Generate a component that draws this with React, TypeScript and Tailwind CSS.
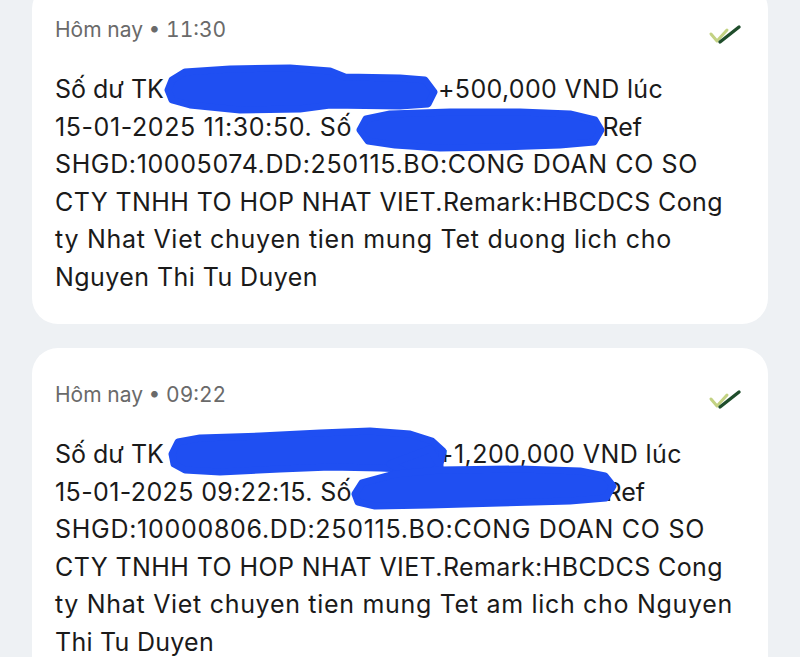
import React, { useLayoutEffect, useRef, useState } from "react";

const font = { fontFamily: "Inter, 'Noto Sans', sans-serif" };

// stretches a run of text to the width it has in the screenshot
const Fit = ({ w, children }: { w: number; children: React.ReactNode }) => {
  const ref = useRef<HTMLSpanElement>(null);
  const [ls, setLs] = useState(0);
  useLayoutEffect(() => {
    const el = ref.current;
    if (!el) return;
    const run = () => {
      const n = (el.textContent || "").length;
      const cur = parseFloat(getComputedStyle(el).letterSpacing) || 0;
      const natural = el.getBoundingClientRect().width - n * cur;
      setLs((w - natural) / n);
    };
    run();
    document.fonts?.ready.then(run);
  }, [w]);
  return (
    <span ref={ref} className="inline-block whitespace-nowrap" style={{ letterSpacing: ls }}>
      {children}
    </span>
  );
};

const DoubleCheck = () => (
  <svg width="34" height="22" viewBox="0 0 34 22" className="mt-[8px] mr-[-2px]">
    <path d="M3 10 L9 17 L19 6" fill="none" stroke="#c3d283" strokeWidth="3" strokeLinecap="round" strokeLinejoin="round" />
    <path d="M12 18 L31 3" fill="none" stroke="#1f4d2b" strokeWidth="3.4" strokeLinecap="round" />
  </svg>
);

const blob = (pts: number[][]) => "M" + pts.map((p) => p.join(" ")).join(" L") + " Z";

// blue marker over the account numbers, in body coordinates
const Redact = ({ shapes }: { shapes: number[][][] }) => (
  <svg className="absolute left-0 top-0 w-full h-full overflow-visible pointer-events-none">
    {shapes.map((s, i) => (
      <path key={i} d={blob(s)} fill="#1f4ff2" stroke="#1f4ff2" strokeWidth="7" strokeLinejoin="round" />
    ))}
  </svg>
);

type Line = { w: number; text?: string; pre?: string; preW?: number; post?: string; postW?: number };

const Card = ({ time, lines, shapes, first }: { time: string; lines: Line[]; shapes: number[][][]; first?: boolean }) => (
  <div className={`bg-white rounded-[26px] pl-[23px] pr-[28px] pt-[33px] pb-[28px] ${first ? "mt-[-17px]" : ""}`}>
    <div className="flex items-start justify-between">
      <div className="text-[21px] leading-[28px] text-[#6a6a6a] tabular-nums">{time}</div>
      <DoubleCheck />
    </div>
    <div className="relative mt-[25px] text-[25px] leading-[37.5px] text-[#1a1a1a]">
      {lines.map((l, i) =>
        l.text ? (
          <div key={i} className="h-[37.5px]">
            <Fit w={l.w}>{l.text}</Fit>
          </div>
        ) : (
          <div key={i} className="flex justify-between h-[37.5px] whitespace-nowrap" style={{ width: l.w }}>
            {l.preW ? <Fit w={l.preW}>{l.pre}</Fit> : <span>{l.pre}</span>}
            {l.postW ? <Fit w={l.postW}>{l.post}</Fit> : <span>{l.post}</span>}
          </div>
        )
      )}
      <Redact shapes={shapes} />
    </div>
  </div>
);

export default function App() {
  return (
    <div className="w-[800px] h-[657px] overflow-hidden bg-[#eef1f4] px-8" style={font}>
      <div className="flex flex-col gap-[24px]">
        <Card
          first
          time="Hôm nay • 11:30"
          lines={[
            { w: 608, pre: "Số dư TK", post: "+500,000 VND lúc", postW: 225 },
            { w: 587, pre: "15-01-2025 11:30:50. Số", preW: 297, post: "Ref" },
            { w: 643, text: "SHGD:10005074.DD:250115.BO:CONG DOAN CO SO" },
            { w: 668, text: "CTY TNHH TO HOP NHAT VIET.Remark:HBCDCS Cong" },
            { w: 617, text: "ty Nhat Viet chuyen tien mung Tet duong lich cho" },
            { w: 263, text: "Nguyen Thi Tu Duyen" },
          ]}
          shapes={[
            [[113, 19], [117, 9], [130, 1], [175, -2], [235, -3], [275, 0], [290, 6], [345, 7], [370, 9], [379, 21], [373, 33], [345, 35], [275, 34], [245, 38], [185, 39], [135, 34], [117, 29]],
            [[305, 59], [311, 48], [335, 43], [395, 41], [465, 41], [515, 43], [540, 49], [546, 59], [539, 71], [505, 74], [445, 76], [385, 77], [340, 74], [313, 70]],
          ]}
        />
        <Card
          time="Hôm nay • 09:22"
          lines={[
            { w: 627, pre: "Số dư TK", post: "+1,200,000 VND lúc", postW: 245 },
            { w: 590, pre: "15-01-2025 09:22:15. Số", preW: 297, post: "Ref" },
            { w: 650, text: "SHGD:10000806.DD:250115.BO:CONG DOAN CO SO" },
            { w: 668, text: "CTY TNHH TO HOP NHAT VIET.Remark:HBCDCS Cong" },
            { w: 678, text: "ty Nhat Viet chuyen tien mung Tet am lich cho Nguyen" },
            { w: 159, text: "Thi Tu Duyen" },
          ]}
          shapes={[
            [[117, 18], [123, 6], [145, 2], [205, 0], [265, -3], [315, -5], [355, -2], [377, 5], [388, 15], [385, 28], [370, 34], [325, 32], [275, 31], [225, 33], [165, 36], [130, 34], [119, 28]],
            [[335, 28], [375, 13], [385, 30], [365, 43]],
            [[300, 58], [307, 47], [340, 38], [385, 34], [465, 33], [525, 35], [550, 40], [558, 50], [551, 62], [515, 65], [445, 67], [375, 69], [320, 70], [303, 66]],
          ]}
        />
      </div>
    </div>
  );
}
